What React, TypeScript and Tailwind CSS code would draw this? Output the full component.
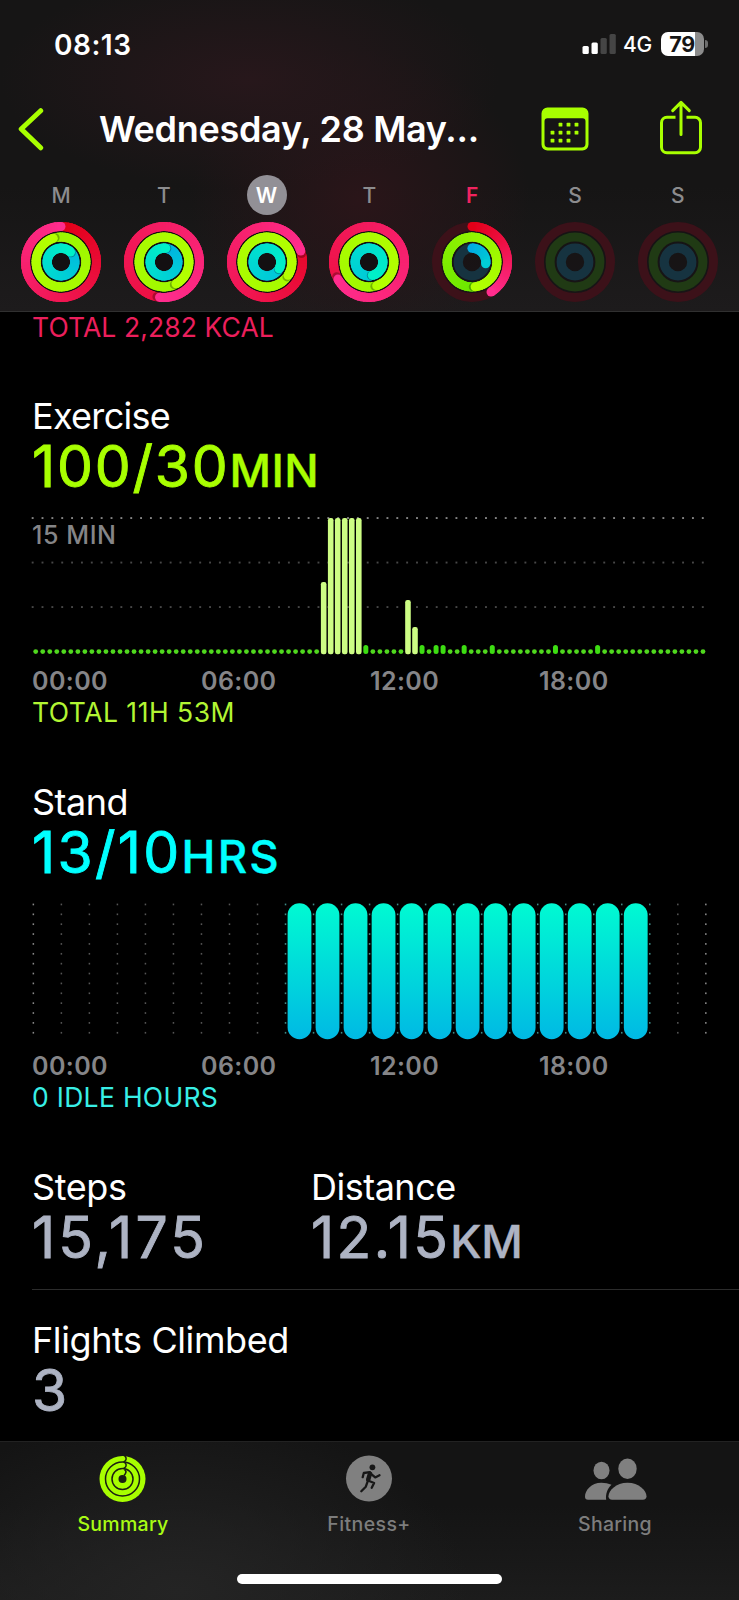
import React from "react";

type RGB = [number, number, number];

const RED: [RGB, RGB] = [[226, 0, 24], [255, 45, 142]];
const GREEN: [RGB, RGB] = [[74, 220, 0], [180, 255, 0]];
const BLUE: [RGB, RGB] = [[0, 172, 228], [0, 240, 200]];

const mix = (a: RGB, b: RGB, t: number) =>
  `rgb(${a.map((v, i) => Math.round(v + (b[i] - v) * t)).join(",")})`;

const polar = (r: number, turn: number): [number, number] => {
  const a = turn * 2 * Math.PI;
  return [41 + r * Math.sin(a), 41 - r * Math.cos(a)];
};

interface RingProps {
  r: number;
  w: number;
  value: number;
  colors: [RGB, RGB];
  track: string;
  curve?: number;
  reach?: number;
}

function Ring({ r, w, value, colors, track, curve = 1, reach = 1 }: RingProps) {
  const from = Math.max(0, value - 1);
  const n = 72;
  const step = (value - from) / n;
  const [sx, sy] = polar(r, 0);
  const [ex, ey] = polar(r, value);
  const [hx, hy] = polar(r, value + 0.012);
  return (
    <g fill="none">
      <circle cx="41" cy="41" r={r} stroke={track} strokeWidth={w} />
      {value > 0 && value < 1 && <circle cx={sx} cy={sy} r={w / 2} fill={mix(colors[0], colors[1], 0)} />}
      {value > 0 &&
        Array.from({ length: n }, (_, i) => {
          const a = from + i * step;
          const [x1, y1] = polar(r, a);
          const [x2, y2] = polar(r, Math.min(value, a + step * 2.5));
          return (
            <path
              key={i}
              d={`M${x1} ${y1}A${r} ${r} 0 0 1 ${x2} ${y2}`}
              stroke={mix(colors[0], colors[1], reach * Math.pow(a / value, curve))}
              strokeWidth={w}
            />
          );
        })}
      {value > 1 && <circle cx={hx} cy={hy} r={w / 2} fill="#000" opacity="0.28" />}
      {value > 0 && <circle cx={ex} cy={ey} r={w / 2} fill={mix(colors[0], colors[1], reach)} />}
    </g>
  );
}

const days = [
  { d: "M", v: [1.0, 1.95, 1.12] },
  { d: "T", v: [1.52, 2.42, 1.02] },
  { d: "W", v: [1.2, 3.34, 1.33] },
  { d: "T", v: [1.67, 2.45, 1.46] },
  { d: "F", v: [0.41, 1.48, 0.27] },
  { d: "S", v: [0, 0, 0] },
  { d: "S", v: [0, 0, 0] },
];

function Rings({ v }: { v: number[] }) {
  return (
    <svg className="h-[82px] w-[82px]" viewBox="0 0 82 82">
      <circle cx="41" cy="41" r="38" fill="#131012" opacity={v[0] >= 1 ? 1 : 0.5} />
      <Ring r={35.5} w={9} value={v[0]} colors={RED} track="#3c1119" />
      <Ring r={24.9} w={9} value={v[1]} colors={GREEN} track="#203a14" curve={v[1] > 1.6 ? 0.4 : 1} />
      <Ring r={13.8} w={9.2} value={v[2]} colors={BLUE} track="#163340" curve={0.75} reach={v[2] < 1 ? 0.5 : 1} />
    </svg>
  );
}

const stubs = [47, 55, 57, 58, 61, 65, 74, 80];
const tall: Record<number, number> = { 41: 582, 42: 518, 43: 518, 44: 518, 45: 518, 46: 518, 53: 600, 54: 627 };

function ExerciseChart() {
  return (
    <svg className="block h-[171px] w-[739px]" viewBox="0 494 739 171">
      {[518, 562.5, 607].map((y, k) =>
        Array.from({ length: 69 }, (_, i) => (
          <rect key={`${k}-${i}`} x={31.7 + i * 9.855} y={y - 0.9} width="1.9" height="1.9" fill={k ? "#484848" : "#848484"} />
        )),
      )}
      {Array.from({ length: 96 }, (_, i) => {
        const x = 35.7 + i * 7.024;
        if (tall[i]) return <rect key={i} x={x - 2.8} y={tall[i]} width="5.6" height={654.2 - tall[i]} rx="2.2" fill="#cdfd84" />;
        if (stubs.includes(i)) return <rect key={i} x={x - 2.5} y="645" width="5" height="9" rx="2.5" fill="#3ddd12" />;
        return <circle key={i} cx={x} cy="651.6" r="2.4" fill="#50d81e" />;
      })}
    </svg>
  );
}

function StandChart() {
  return (
    <svg className="block h-[170px] w-[739px]" viewBox="0 880 739 170">
      <defs>
        <linearGradient id="stand" x1="0" y1="0" x2="0" y2="1">
          <stop offset="0" stopColor="#00fad2" />
          <stop offset="1" stopColor="#00b9e4" />
        </linearGradient>
      </defs>
      {Array.from({ length: 25 }, (_, i) =>
        Array.from({ length: 14 }, (_, j) => (
          <rect
            key={`${i}-${j}`}
            x={32.6 + i * 28.02}
            y={903.6 + j * 9.87}
            width="1.5"
            height="1.7"
            fill={i % 24 === 0 ? "#8a8a8a" : i >= 9 && i <= 22 ? "#3f8a86" : "#555"}
          />
        )),
      )}
      {Array.from({ length: 13 }, (_, i) => (
        <rect key={i} x={287.6 + i * 28.02} y="903.3" width="23.8" height="136" rx="11.9" fill="url(#stand)" />
      ))}
    </svg>
  );
}

function AxisLabels() {
  return (
    <div className="flex h-8 pl-[32px] text-[25px] leading-8 font-semibold tracking-[0.4px] text-[#858588]">
      {["00:00", "06:00", "12:00", "18:00"].map((t) => (
        <span key={t} className="w-[169px]">{t}</span>
      ))}
    </div>
  );
}

function CalendarIcon() {
  const dots = [[18, 17], [26, 17], [34, 17], [10, 25], [18, 25], [26, 25], [34, 25], [10, 33], [18, 33], [26, 33]];
  return (
    <svg className="-mt-[1px] h-[44px] w-[48px]" viewBox="0 0 48 44">
      <path fill="#a8ff00" fillRule="evenodd" d="M6.5 0.4h35a6 6 0 0 1 6 6v31a6 6 0 0 1-6 6h-35a6 6 0 0 1-6-6v-31a6 6 0 0 1 6-6ZM6.500 11.200a3 3 0 0 0-3 3v22.300a4 4 0 0 0 4 4h33a4 4 0 0 0 4-4v-22.300a3 3 0 0 0-3-3Z" />
      {dots.map(([x, y]) => (
        <rect key={`${x}-${y}`} x={x - 0.4} y={y - 1.2} width="3.8" height="3.8" rx="0.7" fill="#a8ff00" />
      ))}
    </svg>
  );
}

function ShareIcon() {
  return (
    <svg className="h-[56px] w-[44px]" viewBox="0 0 44 56" fill="none" stroke="#a8ff00" strokeWidth="3" strokeLinecap="round" strokeLinejoin="round">
      <path strokeLinecap="butt" d="M16.500 17.300H8a5.500 5.500 0 0 0-5.500 5.500v24.400a5.500 5.500 0 0 0 5.500 5.500h28a5.500 5.500 0 0 0 5.500-5.500V22.800a5.500 5.500 0 0 0-5.500-5.500h-8.500" />
      <path d="M22 34.500V3M13.700 10.600 22 2.400l8.300 8.200" />
    </svg>
  );
}

const tab = "flex flex-1 flex-col items-center text-[19.5px] leading-6 font-medium";
const value = "flex h-14 items-baseline text-[57px] leading-[57px] font-normal [-webkit-text-stroke:0.9px_currentColor]";
const unit = "text-[45.5px] font-medium [-webkit-text-stroke:0.4px_currentColor]";
const title = "h-11 text-[36px] leading-[44px]";

export default function App() {
  return (
    <div className="flex h-[1600px] w-[739px] flex-col overflow-hidden bg-black font-['Inter',sans-serif] text-white">
      <header className="flex h-[312px] shrink-0 flex-col border-b border-[#303030] bg-[#161515] bg-[radial-gradient(ellipse_250px_110px_at_250px_80px,#27171b,transparent),radial-gradient(ellipse_170px_150px_at_360px_200px,#2a1519,transparent),linear-gradient(to_bottom,transparent_60%,#1d1b1c)]">
        <div className="flex h-[88px] items-center justify-between pr-[31px] pl-[54px]">
          <span className="pt-[1px] text-[28px] font-semibold tracking-[0.5px]">08:13</span>
          <div className="flex items-center">
            <svg className="h-6 w-[35px]" viewBox="0 0 35 24">
              <rect x="0.500" y="14" width="6.300" height="8" rx="1.500" fill="#fff" />
              <rect x="9.500" y="10.400" width="6.300" height="11.600" rx="1.500" fill="#fff" />
              <rect x="18.500" y="6" width="6.300" height="16" rx="1.500" fill="#454545" />
              <rect x="27.500" y="2" width="6.300" height="20" rx="1.500" fill="#454545" />
            </svg>
            <span className="ml-[6px] w-[31px] pt-[2px] text-[21px] font-medium tracking-[-0.4px]">4G</span>
            <div className="ml-[7px] flex h-6 w-[43px] items-center justify-center overflow-hidden rounded-[7px] bg-[linear-gradient(to_right,#fff_79%,#8c8c8c_79%)] pr-[1px] text-[21.5px] font-bold tracking-[-0.5px] text-[#151515]">
              79
            </div>
            <div className="ml-[1px] h-2 w-[3px] rounded-r-full bg-[#6e6e6e]" />
          </div>
        </div>
        <div className="flex h-[82px] items-center">
          <svg className="ml-[17px] h-[44px] w-[28px]" viewBox="0 0 28 44" fill="none">
            <path d="M23.700 3.700 4.200 22l19.500 18.800" stroke="#a8ff00" strokeWidth="5" strokeLinecap="round" strokeLinejoin="round" />
          </svg>
          <h1 className="ml-[54px] w-[442px] text-[36px] font-semibold tracking-[-0.3px] whitespace-nowrap">Wednesday, 28 May...</h1>
          <CalendarIcon />
          <div className="-mt-[3px] ml-[70px]"><ShareIcon /></div>
        </div>
        <div className="flex pl-[9.6px]">
          {days.map(({ d, v }, i) => (
            <div key={i} className="flex w-[102.8px] shrink-0 flex-col items-center">
              <div
                className={
                  "mt-[5px] flex h-10 w-10 items-center justify-center rounded-full pt-[1px] text-[21px] " +
                  (i === 2 ? "bg-[#929096] font-semibold text-white" : i === 4 ? "font-semibold text-[#f0235f]" : "font-medium text-[#8c8c8e]")
                }
              >
                {d}
              </div>
              <div className="mt-[6px]"><Rings v={v} /></div>
            </div>
          ))}
        </div>
      </header>

      <main className="flex h-[1129px] shrink-0 flex-col">
        <p className="h-[30px] pl-[32px] text-[26.5px] leading-[30px] tracking-[0.1px] text-[#eb1f5c]">TOTAL 2,282 KCAL</p>

        <section className="mt-[52px]">
          <h2 className={title + " pl-[32px] tracking-[-0.7px]"}>Exercise</h2>
          <div className={value + " pl-[32px] text-[#a8ff00]"}>
            <span className="tracking-[1.8px]">100/30</span>
            <span className={unit + " tracking-[0.3px]"}>MIN</span>
          </div>
          <div className="relative">
            <ExerciseChart />
            <span className="absolute top-[26px] left-[32px] text-[25px] leading-[30px] font-medium tracking-[0.6px] text-[#858587]">15 MIN</span>
          </div>
          <AxisLabels />
          <p className="h-[30px] pl-[32px] text-[26.5px] leading-[30px] tracking-[0.5px] text-[#b2f533]">TOTAL 11H 53M</p>
        </section>

        <section className="mt-[53px]">
          <h2 className={title + " pl-[32px] tracking-[-0.5px]"}>Stand</h2>
          <div className={value + " pl-[32px] text-[#0ff]"}>
            <span className="tracking-[2.3px]">13/10</span>
            <span className={unit + " tracking-[2.2px]"}>HRS</span>
          </div>
          <StandChart />
          <AxisLabels />
          <p className="h-[30px] pl-[32px] text-[26.5px] leading-[30px] tracking-[0.3px] text-[#38efe6]">0 IDLE HOURS</p>
        </section>

        <section className="mt-[53px] ml-[32px] flex h-[125px] border-b border-[#2c2c2c]">
          <div className="w-[279px]">
            <h2 className={title + " tracking-[-0.4px]"}>Steps</h2>
            <div className={value + " text-[#adb3c3]"}><span className="tracking-[3.1px]">15,175</span></div>
          </div>
          <div>
            <h2 className={title + " tracking-[-0.5px]"}>Distance</h2>
            <div className={value + " text-[#adb3c3]"}>
              <span className="tracking-[2.4px]">12.15</span>
              <span className={unit + " tracking-[-0.3px]"}>KM</span>
            </div>
          </div>
        </section>

        <section className="mt-[28px] ml-[32px]">
          <h2 className={title + " tracking-[-0.4px]"}>Flights Climbed</h2>
          <div className={value + " text-[#adb3c3]"}><span>3</span></div>
        </section>
      </main>

      <footer className="flex h-[159px] shrink-0 flex-col items-center border-t border-[#222] bg-[#141414] bg-[radial-gradient(ellipse_290px_180px_at_180px_150px,#242424,transparent),linear-gradient(to_bottom,transparent_40%,#1c1c1c)]">
        <div className="flex h-[132px] w-full pt-[13px] pr-[1px]">
          <div className={tab + " tracking-[0.3px] text-[#a9fb14]"}>
            <svg className="mb-[9px] h-[48px] w-[48px]" viewBox="0 0 48 48">
              <circle cx="23.500" cy="24" r="23" fill="#a8ff00" />
              <g fill="none" stroke="#1b1f12" strokeWidth="1.500">
                <circle cx="23.500" cy="24" r="17" />
                <circle cx="23.500" cy="24" r="10.500" />
                <path d="M25.500 1a3 3 0 0 1 1 4.500q-1 1.200-2 1.500M25.500 7.500a3 3 0 0 1 1 4.500l-2 1.500M25.500 14.500a3 3 0 0 1 1 4l-1.500 2" />
              </g>
              <circle cx="23.500" cy="24" r="4" fill="#1b1f12" />
            </svg>
            Summary
          </div>
          <div className={tab + " tracking-[0.4px] text-[#7d7d7d]"}>
            <svg className="mb-[9px] h-[48px] w-[48px]" viewBox="0 0 48 48">
              <circle cx="24" cy="23.500" r="23" fill="#808080" />
              <circle cx="27.400" cy="12.300" r="2.900" fill="#171717" />
              <g fill="none" stroke="#171717" strokeWidth="2.300" strokeLinecap="round" strokeLinejoin="round">
                <path d="M17.700 22.200 18.800 18l6-.8M26 18.800l4.200 3.600 4.300-2.200" />
                <path d="m23.500 25.800 5.600 2.200-2.400 4.700M22.700 26.300l-1.900 5.400-4.500 4.600" />
                <path strokeWidth="4.500" d="m25 18.600-1.800 6" />
              </g>
            </svg>
            Fitness+
          </div>
          <div className={tab + " tracking-[0.3px] text-[#7d7d7d]"}>
            <svg className="mb-[9px] h-[48px] w-[64px]" viewBox="0 0 64 48" fill="#808080">
              <ellipse cx="18.500" cy="15.500" rx="8" ry="8.700" />
              <ellipse cx="44.500" cy="13.700" rx="9.200" ry="10.200" />
              <path d="M28.500 29.800C25.500 28.400 22 27.700 18.500 27.700 8 27.700 2 35.500 2 41.700c0 1.700 1 3 3 3h18.200c-.8-5 1-11 5.300-14.900Z" />
              <path d="M44.500 27.700c-11.500 0-19 8-19 13.500 0 2 1.300 3.500 3.600 3.500h30.800c2.300 0 3.600-1.500 3.600-3.500 0-5.500-7.500-13.500-19-13.500Z" />
            </svg>
            Sharing
          </div>
        </div>
        <div className="h-[10px] w-[265px] rounded-full bg-white" />
      </footer>
    </div>
  );
}
